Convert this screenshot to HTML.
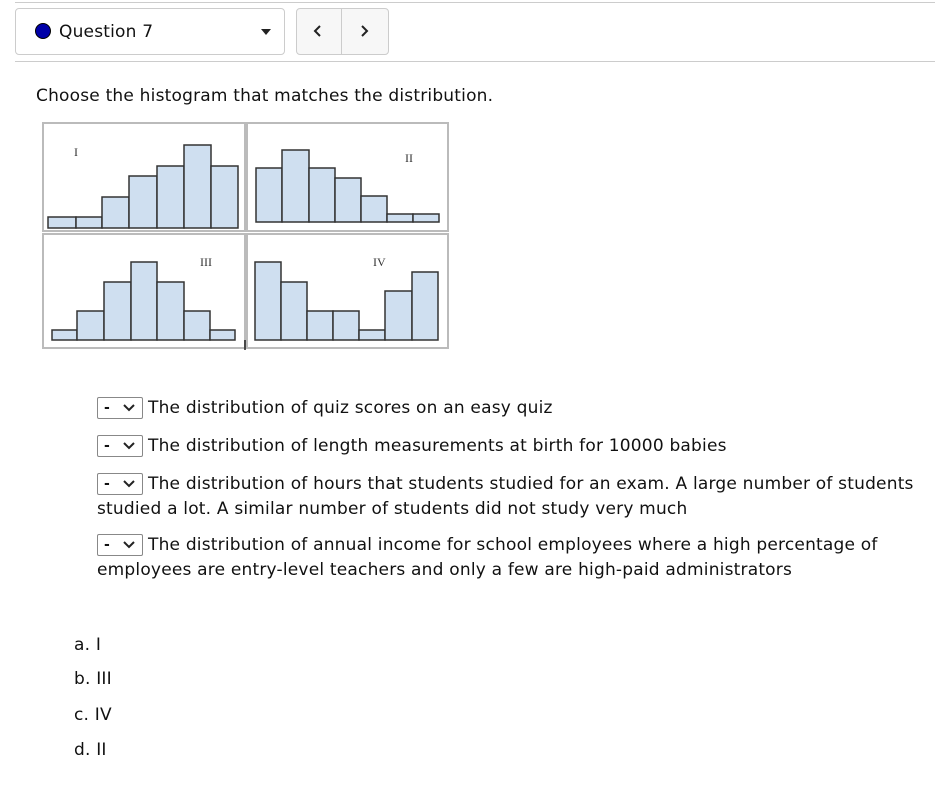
<!DOCTYPE html>
<html><head><meta charset="utf-8"><style>
body{margin:0;width:935px;height:787px;background:#fff;position:relative;overflow:hidden;font-family:"DejaVu Sans","Liberation Sans",sans-serif;color:#111;font-size:17px;letter-spacing:0.2px}
.a{position:absolute;white-space:nowrap;line-height:20px}
.hr{position:absolute;left:15px;right:0;height:1px;background:#ccc}
.sel{position:absolute;width:44px;height:20px;border:1px solid #888;border-radius:2px;background:#fff}
.sel span{position:absolute;left:6px;top:0;font-size:14px;font-weight:bold;line-height:20px}
.sel svg{position:absolute;left:25px;top:6px}
</style></head><body>
<div class="hr" style="top:2px"></div>
<div style="position:absolute;left:15px;top:8px;width:268px;height:45px;border:1px solid #ccc;border-radius:4px"></div>
<div style="position:absolute;left:35px;top:23px;width:14px;height:14px;border-radius:50%;background:#0000a8;border:1px solid #000"></div>
<div class="a" style="left:59px;top:22px;font-size:17px">Question 7</div>
<svg style="position:absolute;left:260px;top:28px" width="12" height="8"><path d="M1 1h10L6 7z" fill="#222"/></svg>
<div style="position:absolute;left:296px;top:8px;width:91px;height:45px;border:1px solid #ccc;border-radius:4px;background:#f7f7f7"></div>
<div style="position:absolute;left:341px;top:9px;width:1px;height:45px;background:#ccc"></div>
<svg style="position:absolute;left:312px;top:24px" width="12" height="14"><path d="M8 2L3 7l5 5" stroke="#222" stroke-width="2" fill="none"/></svg>
<svg style="position:absolute;left:358px;top:24px" width="12" height="14"><path d="M4 2l5 5-5 5" stroke="#222" stroke-width="2" fill="none"/></svg>
<div class="hr" style="top:61px"></div>
<div class="a" style="left:36px;top:86px">Choose the histogram that matches the distribution.</div>

<svg style="position:absolute;left:0;top:0" width="460" height="360">
<g fill="none" stroke="#bbb" stroke-width="2">
<rect x="43" y="123" width="202" height="108"/><rect x="247" y="123" width="201" height="108"/>
<rect x="43" y="234" width="202" height="114"/><rect x="247" y="234" width="201" height="114"/>
</g>
<line x1="245" y1="340" x2="245" y2="350" stroke="#222" stroke-width="1.5"/>
<g fill="#cfdff0" stroke="#333" stroke-width="1.5">
<rect x="48" y="217" width="28" height="11"/><rect x="76" y="217" width="26" height="11"/><rect x="102" y="197" width="27" height="31"/><rect x="129" y="176" width="28" height="52"/><rect x="157" y="166" width="27" height="62"/><rect x="184" y="145" width="27" height="83"/><rect x="211" y="166" width="27" height="62"/>
<rect x="256" y="168" width="26" height="54"/><rect x="282" y="150" width="27" height="72"/><rect x="309" y="168" width="26" height="54"/><rect x="335" y="178" width="26" height="44"/><rect x="361" y="196" width="26" height="26"/><rect x="387" y="214" width="26" height="8"/><rect x="413" y="214" width="26" height="8"/>
<rect x="52" y="330" width="25" height="10"/><rect x="77" y="311" width="27" height="29"/><rect x="104" y="282" width="27" height="58"/><rect x="131" y="262" width="26" height="78"/><rect x="157" y="282" width="27" height="58"/><rect x="184" y="311" width="26" height="29"/><rect x="210" y="330" width="25" height="10"/>
<rect x="255" y="262" width="26" height="78"/><rect x="281" y="282" width="26" height="58"/><rect x="307" y="311" width="26" height="29"/><rect x="333" y="311" width="26" height="29"/><rect x="359" y="330" width="26" height="10"/><rect x="385" y="291" width="27" height="49"/><rect x="412" y="272" width="26" height="68"/>
</g>
<g font-family="Liberation Serif,serif" font-size="12" fill="#333" letter-spacing="0">
<text x="74" y="156">I</text><text x="405" y="162">II</text><text x="200" y="266">III</text><text x="373" y="266">IV</text>
</g>
</svg>

<div class="sel" style="left:97px;top:397px"><span>-</span><svg width="12" height="8"><path d="M1 1l5 5 5-5" stroke="#222" stroke-width="2" fill="none"/></svg></div>
<div class="a" style="left:148px;top:398px">The distribution of quiz scores on an easy quiz</div>
<div class="sel" style="left:97px;top:435px"><span>-</span><svg width="12" height="8"><path d="M1 1l5 5 5-5" stroke="#222" stroke-width="2" fill="none"/></svg></div>
<div class="a" style="left:148px;top:436px">The distribution of length measurements at birth for 10000 babies</div>
<div class="sel" style="left:97px;top:473px"><span>-</span><svg width="12" height="8"><path d="M1 1l5 5 5-5" stroke="#222" stroke-width="2" fill="none"/></svg></div>
<div class="a" style="left:148px;top:474px">The distribution of hours that students studied for an exam. A large number of students</div>
<div class="a" style="left:97px;top:499px">studied a lot. A similar number of students did not study very much</div>
<div class="sel" style="left:97px;top:534px"><span>-</span><svg width="12" height="8"><path d="M1 1l5 5 5-5" stroke="#222" stroke-width="2" fill="none"/></svg></div>
<div class="a" style="left:148px;top:535px">The distribution of annual income for school employees where a high percentage of</div>
<div class="a" style="left:97px;top:560px">employees are entry-level teachers and only a few are high-paid administrators</div>

<div class="a" style="left:74px;top:635px">a. I</div>
<div class="a" style="left:74px;top:669px">b. III</div>
<div class="a" style="left:74px;top:705px">c. IV</div>
<div class="a" style="left:74px;top:740px">d. II</div>
</body></html>
